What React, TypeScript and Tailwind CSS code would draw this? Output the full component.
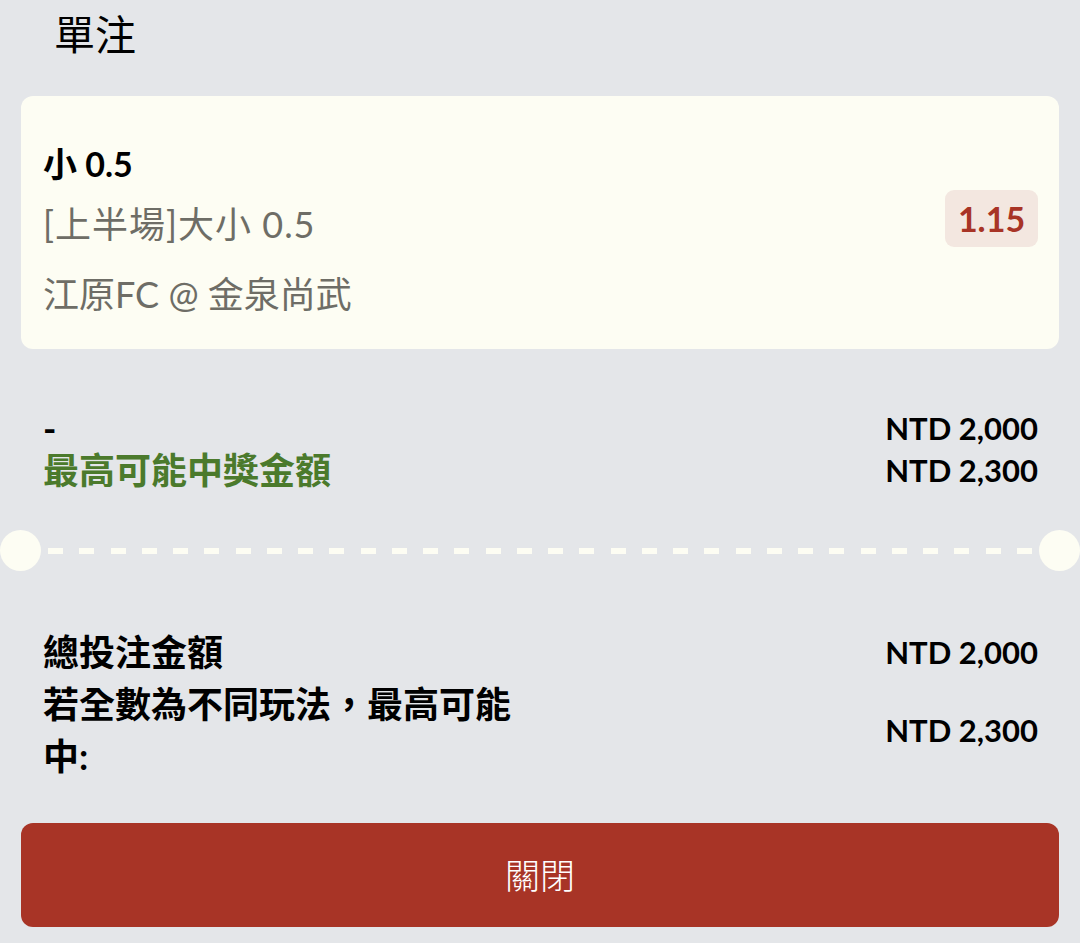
import React from "react";

const font = { fontFamily: "Lato, 'Noto Sans CJK TC', 'Noto Sans', sans-serif" };

export default function App() {
  const dashes = Array.from({ length: 32 });
  return (
    <div
      className="w-[1080px] h-[943px] bg-[#e4e6e9] overflow-hidden flex flex-col"
      style={font}
    >
      <div className="pl-[54px] pt-[9px] h-[96px] text-[41px] leading-[52px] text-black font-normal">
        單注
      </div>

      <div className="mx-[21px] h-[253px] rounded-[12px] bg-[#fdfdf3] pl-[22px] pr-[21px] flex items-center justify-between">
        <div className="flex flex-col pt-[12px]">
          <div className="text-[34px] leading-[48px] font-bold text-black">小 0.5</div>
          <div className="mt-[12px] text-[36px] leading-[48px] tracking-[1px] text-[#6e6d66]">[上半場]大小 0.5</div>
          <div className="mt-[22px] text-[36px] leading-[48px] text-[#6e6d66]">江原FC @ 金泉尚武</div>
        </div>
        <div className="w-[93px] h-[57px] rounded-[9px] bg-[#f3e7e0] flex items-center justify-center text-[34px] font-bold text-[#a83426] mt-[-8px]">
          1.15
        </div>
      </div>

      <div className="ml-[43px] mr-[42px] mt-[58px] flex flex-col">
        <div className="flex items-center justify-between h-[42px]">
          <div className="text-[36px] font-bold text-black leading-[42px]">-</div>
          <div className="text-[31px] font-bold text-black leading-[42px]">NTD 2,000</div>
        </div>
        <div className="flex items-center justify-between h-[42px]">
          <div className="text-[36px] font-bold text-[#4b7a2c] leading-[42px]">最高可能中獎金額</div>
          <div className="text-[31px] font-bold text-black leading-[42px]">NTD 2,300</div>
        </div>
      </div>

      <div className="mt-[39px] h-[41px] flex items-center">
        <div className="w-[41px] h-[41px] rounded-full bg-[#fdfdf3] shrink-0" />
        <div className="flex-1 flex items-center justify-between px-[7px] overflow-hidden">
          {dashes.map((_, i) => (
            <div key={i} className="w-[15px] h-[6px] bg-[#fdfdf3] shrink-0" />
          ))}
        </div>
        <div className="w-[41px] h-[41px] rounded-full bg-[#fdfdf3] shrink-0" />
      </div>

      <div className="ml-[43px] mr-[42px] mt-[55px] flex flex-col">
        <div className="flex items-center justify-between">
          <div className="text-[36px] font-bold text-black leading-[52px]">總投注金額</div>
          <div className="text-[31px] font-bold text-black leading-[52px]">NTD 2,000</div>
        </div>
        <div className="flex items-center justify-between">
          <div className="w-[490px] text-[36px] font-bold text-black leading-[52px]">
            若全數為不同玩法，最高可能中:
          </div>
          <div className="text-[31px] font-bold text-black leading-[52px]">NTD 2,300</div>
        </div>
      </div>

      <div className="mx-[21px] mt-[41px] h-[104px] rounded-[12px] bg-[#a83426] flex items-center justify-center text-white text-[35px] font-light">
        關閉
      </div>
    </div>
  );
}
